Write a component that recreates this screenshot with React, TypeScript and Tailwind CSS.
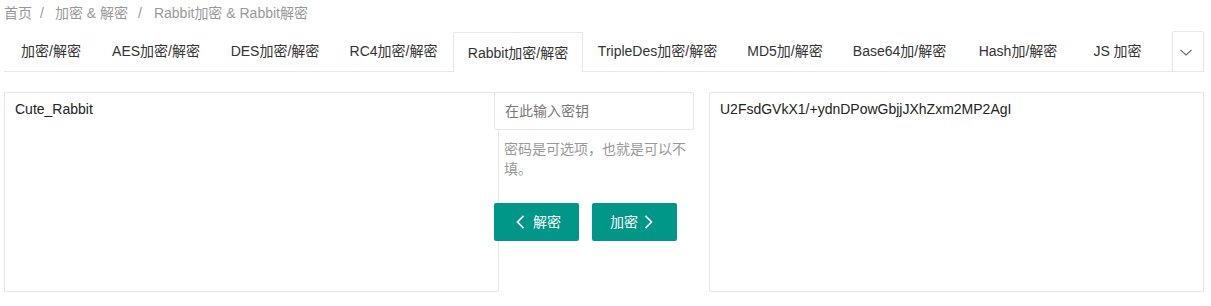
import React from "react";

const tabs: { label: string; w: string; active?: boolean }[] = [
  { label: "加密/解密", w: "w-[90px]" },
  { label: "AES加密/解密", w: "w-[120px]" },
  { label: "DES加密/解密", w: "w-[118px]" },
  { label: "RC4加密/解密", w: "w-[119px]" },
  { label: "Rabbit加密/解密", w: "w-[130px]", active: true },
  { label: "TripleDes加密/解密", w: "w-[149px]" },
  { label: "MD5加/解密", w: "w-[106px]" },
  { label: "Base64加/解密", w: "w-[123px]" },
  { label: "Hash加/解密", w: "w-[114px]" },
  { label: "JS 加密", w: "w-[85px]" },
];

const font = { fontFamily: '"Liberation Sans", Arial, "Noto Sans CJK SC", sans-serif' };

export default function App() {
  return (
    <div className="w-[1211px] h-[306px] bg-white text-[14px] text-[#333] pl-[4px]" style={font}>
      <div className="w-[1200px]">
        {/* Breadcrumb */}
        <div className="h-[26px] leading-[26px] text-[#999] flex">
          <span>首页</span>
          <span className="ml-[8px] mr-[11px]">/</span>
          <span>加密 &amp; 解密</span>
          <span className="ml-[10px] mr-[12px]">/</span>
          <span>Rabbit加密 &amp; Rabbit解密</span>
        </div>

        {/* Tabs */}
        <div className="relative mt-[6px]">
          <ul className="flex h-[40px] border-b border-[#e6e6e6] pl-[2px] list-none m-0">
            {tabs.map((t) =>
              t.active ? (
                <li
                  key={t.label}
                  className={`${t.w} relative z-[1] h-[40px] shrink-0 bg-white border border-b-0 border-[#e6e6e6] rounded-t-[2px] flex items-center justify-center text-[#333] leading-[38px]`}
                >
                  {t.label}
                </li>
              ) : (
                <li
                  key={t.label}
                  className={`${t.w} h-[39px] shrink-0 flex items-center justify-center text-[#333]`}
                >
                  {t.label}
                </li>
              )
            )}
          </ul>
          <div className="absolute right-0 top-[-1px] z-[2] w-[32px] h-[41px] border border-[#e6e6e6] rounded-[2px] bg-white flex items-center justify-center">
            <svg width="12" height="7" viewBox="0 0 12 7" className="mt-[2px] mr-[4px]">
              <path d="M0.5 0.8 L6 6 L11.5 0.8" fill="none" stroke="#666" strokeWidth="1.1" />
            </svg>
          </div>
        </div>

        {/* Content */}
        <div className="flex mt-[20px]">
          <textarea
            readOnly
            value="Cute_Rabbit"
            className="w-[495px] h-[200px] shrink-0 border border-[#e6e6e6] px-[10px] py-[6px] leading-[20px] text-[14px] text-[#222] resize-none outline-none bg-white rounded-[2px]"
            style={font}
          />
          <div className="w-[200px] shrink-0 ml-[-5px] relative z-[1] flex flex-col">
            <input
              placeholder="在此输入密钥"
              className="w-[200px] h-[38px] border border-[#e6e6e6] pl-[10px] text-[14px] outline-none bg-white rounded-[2px] placeholder:text-[#777]"
              style={font}
            />
            <div className="pt-[9px] pl-[10px] pr-[4px] leading-[20px] text-[#999]">
              密码是可选项，也就是可以不填。
            </div>
            <div className="flex mt-[24px] gap-[13px]">
              <button className="w-[85px] h-[38px] bg-[#009688] text-white rounded-[2px] flex items-center pl-[22px] gap-[8px]">
                <svg width="9" height="14" viewBox="0 0 9 14">
                  <path d="M7.5 0.8 L1.5 7 L7.5 13.2" fill="none" stroke="#fff" strokeWidth="1.7" />
                </svg>
                <span>解密</span>
              </button>
              <button className="w-[85px] h-[38px] bg-[#009688] text-white rounded-[2px] flex items-center pl-[18px] gap-[6px]">
                <span>加密</span>
                <svg width="9" height="14" viewBox="0 0 9 14">
                  <path d="M1.5 0.8 L7.5 7 L1.5 13.2" fill="none" stroke="#fff" strokeWidth="1.7" />
                </svg>
              </button>
            </div>
          </div>
          <textarea
            readOnly
            value="U2FsdGVkX1/+ydnDPowGbjjJXhZxm2MP2AgI"
            className="ml-[15px] w-[495px] h-[200px] shrink-0 border border-[#e6e6e6] px-[10px] py-[6px] leading-[20px] text-[14px] text-[#222] resize-none outline-none bg-white rounded-[2px]"
            style={font}
          />
        </div>
      </div>
    </div>
  );
}
